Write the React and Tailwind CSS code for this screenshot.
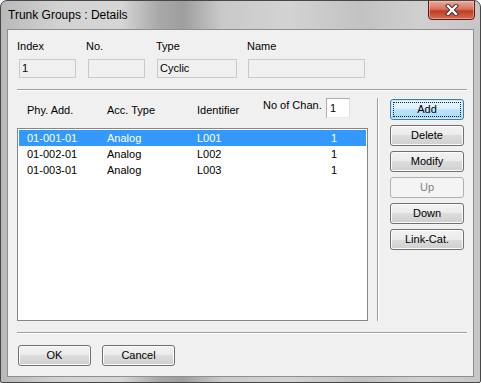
import React from "react";

const font = { fontFamily: '"Liberation Sans", Arial, sans-serif' };

function Btn({ children, kind = "normal", className = "" }) {
  const base =
    "flex items-center justify-center h-[21px] rounded-[3px] border text-[11px] leading-[13px] ";
  if (kind === "default") {
    return (
      <div
        className={
          base +
          "border-[#3c7fb1] bg-[linear-gradient(to_bottom,#eaf6fd_0%,#d9f0fc_50%,#bee6fd_50%,#a7d9f5_100%)] shadow-[inset_0_0_0_1px_#c8e7f8] text-black p-[2px] " +
          className
        }
      >
        <div className="w-full h-full flex items-center justify-center border border-dotted border-[#222]">
          {children}
        </div>
      </div>
    );
  }
  if (kind === "disabled") {
    return (
      <div
        className={
          base + "border-[#adb2b5] bg-[#f4f4f4] text-[#838383] " + className
        }
      >
        {children}
      </div>
    );
  }
  return (
    <div
      className={
        base +
        "border-[#707070] bg-[linear-gradient(to_bottom,#f2f2f2_0%,#ebebeb_50%,#dddddd_50%,#cfcfcf_100%)] shadow-[inset_0_0_0_1px_#fbfbfb] text-black " +
        className
      }
    >
      {children}
    </div>
  );
}

function Field({ label, value, w, ml, colW }) {
  return (
    <div className={"flex flex-col " + colW}>
      <div className="leading-[14px] h-[14px]">{label}</div>
      <div
        className={
          "mt-[6px] h-[19px] border border-[#c9c9c9] bg-[#f0f0f0] flex items-center pl-[2px] text-black " +
          w +
          " " +
          ml
        }
      >
        {value}
      </div>
    </div>
  );
}

const rows = [
  { a: "01-001-01", t: "Analog", id: "L001", n: "1", sel: true },
  { a: "01-002-01", t: "Analog", id: "L002", n: "1" },
  { a: "01-003-01", t: "Analog", id: "L003", n: "1" },
];

export default function App() {
  return (
    <div
      style={font}
      className="w-[481px] h-[383px] flex flex-col border border-[#474747] rounded-t-[7px] rounded-b-[2px] bg-[linear-gradient(to_right,#b9b9b9_0%,#d2d2d2_12%,#d6d6d6_25%,#a8a8a8_33%,#9e9e9e_38%,#c9c9c9_46%,#d3d3d3_60%,#c2c2c2_75%,#d0d0d0_88%,#c6c6c6_100%)] px-[6px] pb-[5px] text-[11px] text-black overflow-hidden"
    >
      {/* Title bar */}
      <div className="h-[28px] flex items-start justify-between shrink-0">
        <div className="pl-[1px] h-[27px] flex items-center text-[12px] text-black">
          Trunk Groups : Details
        </div>
        <div className="mr-[-1px] mt-[-1px] w-[47px] h-[20px] rounded-b-[4px] border border-[#5a1a12] bg-[linear-gradient(to_bottom,#e9a99b_0%,#d9735f_45%,#c13d24_55%,#d66a4f_100%)] shadow-[inset_0_0_0_1px_rgba(255,210,200,0.5)] flex items-center justify-center">
          <svg width="14" height="12" viewBox="0 0 14 12">
            <path
              d="M3 2 L11 10 M11 2 L3 10"
              stroke="#3b3b3b"
              strokeWidth="4.2"
              strokeLinecap="square"
            />
            <path
              d="M3 2 L11 10 M11 2 L3 10"
              stroke="#ffffff"
              strokeWidth="2.2"
              strokeLinecap="square"
            />
          </svg>
        </div>
      </div>

      {/* Client area */}
      <div className="flex-1 border border-[#8e8e8e] bg-[#f0f0f0] flex flex-col pl-[9px] pt-[9px]">
        {/* Top fields */}
        <div className="flex">
          <Field label="Index" value="1" colW="w-[69px]" w="w-[57px]" ml="ml-[2px]" />
          <Field label="No." value="" colW="w-[70px]" w="w-[57px]" ml="ml-[2px]" />
          <Field label="Type" value="Cyclic" colW="w-[91px]" w="w-[80px]" ml="ml-[1px]" />
          <Field label="Name" value="" colW="w-[130px]" w="w-[117px]" ml="ml-[1px]" />
        </div>

        <div className="mt-[11px] w-[450px] h-[2px] border-t border-[#a0a0a0] border-b border-b-white" />

        {/* Middle section */}
        <div className="mt-[7px] flex items-start">
          <div className="w-[351px] flex flex-col">
            <div className="h-[30px] flex items-start pl-[10px]">
              <div className="w-[80px] mt-[6px] leading-[13px]">Phy. Add.</div>
              <div className="w-[90px] mt-[6px] leading-[13px]">Acc. Type</div>
              <div className="w-[66px] mt-[6px] leading-[13px]">Identifier</div>
              <div className="w-[63px] mt-[1px] leading-[13px]">No of Chan.</div>
              <div className="w-[24px] h-[20px] bg-white border border-[#abadb3] border-b-[#e3e9ef] border-r-[#dbdfe6] flex items-center pl-[3px]">
                1
              </div>
            </div>
            <div className="h-[193px] border border-[#828790] bg-white p-[1px] flex flex-col">
              {rows.map((r) => (
                <div
                  key={r.a}
                  className={
                    "h-[16px] flex items-center pl-[8px] pr-[29px] leading-[13px] " +
                    (r.sel ? "bg-[#3399ff] text-white" : "text-black")
                  }
                >
                  <div className="w-[80px]">{r.a}</div>
                  <div className="w-[90px]">{r.t}</div>
                  <div className="flex-1">{r.id}</div>
                  <div>{r.n}</div>
                </div>
              ))}
            </div>
          </div>

          <div className="ml-[9px] w-[2px] h-[223px] border-l border-[#a0a0a0] border-r border-r-white" />

          <div className="ml-[11px] mt-[1px] flex flex-col gap-[5px] w-[74px]">
            <Btn kind="default">Add</Btn>
            <Btn>Delete</Btn>
            <Btn>Modify</Btn>
            <Btn kind="disabled">Up</Btn>
            <Btn>Down</Btn>
            <Btn>Link-Cat.</Btn>
          </div>
        </div>

        <div className="mt-[11px] w-[450px] h-[2px] border-t border-[#a0a0a0] border-b border-b-white" />

        <div className="mt-[11px] ml-[1px] flex gap-[11px]">
          <Btn className="w-[73px]">OK</Btn>
          <Btn className="w-[73px]">Cancel</Btn>
        </div>
      </div>
    </div>
  );
}
